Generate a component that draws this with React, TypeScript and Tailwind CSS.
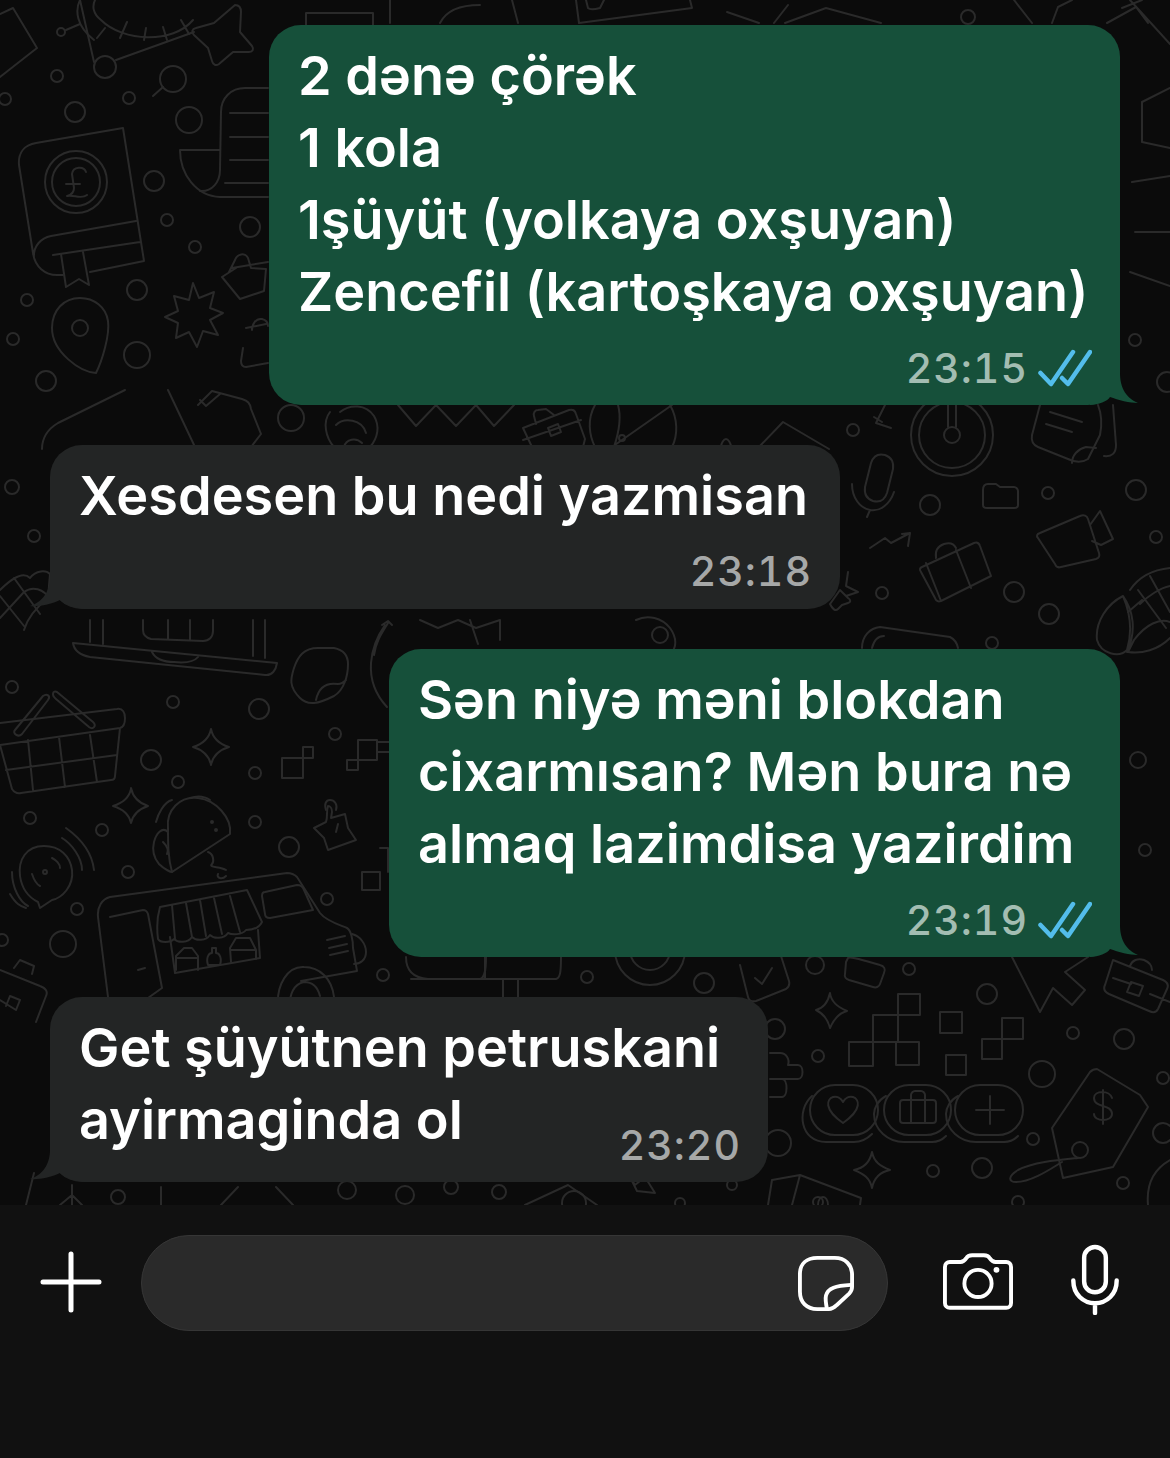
import React from 'react';

const font = "font-['Inter','Liberation_Sans',sans-serif]";

// wallpaper circles, page coordinates: cx, cy, r
const dots: [number, number, number][] = [
  [57, 76, 6], [75, 112, 10], [129, 98, 6], [5, 99, 6], [189, 120, 13], [154, 181, 10], [167, 220, 6], [195, 247, 6],
  [250, 227, 10], [27, 300, 6], [137, 290, 10], [13, 339, 6], [137, 355, 13], [46, 381, 10], [291, 418, 13],
  [12, 487, 7], [34, 536, 6], [853, 430, 6], [930, 505, 10], [1048, 493, 6], [1136, 490, 10], [1156, 537, 6],
  [882, 593, 6], [1014, 592, 10], [1049, 614, 10], [992, 643, 6], [1135, 340, 6], [1167, 382, 10],
  [12, 687, 6], [173, 702, 6], [259, 709, 10], [335, 734, 6], [151, 760, 10], [178, 782, 6], [255, 773, 6],
  [30, 818, 6], [102, 830, 6], [255, 822, 6], [289, 847, 10], [128, 872, 6], [77, 909, 6], [63, 944, 13],
  [2, 940, 6], [327, 899, 6], [383, 975, 6], [587, 977, 6], [704, 983, 10],
  [987, 994, 10], [909, 969, 6], [815, 965, 9], [1073, 1033, 6], [1124, 1039, 10], [1042, 1074, 13], [1163, 1078, 6],
  [1033, 1139, 6], [982, 1168, 10], [933, 1171, 6], [1123, 1183, 6], [1018, 1202, 6], [818, 1056, 6], [775, 1029, 10],
  [778, 1143, 13], [1163, 1133, 10], [347, 1190, 9], [118, 1197, 7], [405, 1195, 9], [451, 1187, 7], [499, 1192, 7],
  [732, 1185, 5], [680, 1203, 5], [818, 1202, 5], [968, 17, 7], [1145, 850, 6], [1138, 760, 8],
];

function Wallpaper() {
  return (
    <svg className="absolute inset-0" width="1170" height="1205" viewBox="0 0 1170 1205" fill="none" stroke="#2a2a2a" strokeWidth="2" strokeLinecap="round" strokeLinejoin="round">
      {dots.map(([cx, cy, r], i) => <circle key={i} cx={cx} cy={cy} r={r} />)}

      {/* top left: box, roulette wheel, magnifier, star */}
      <path d="M13 8l24 40L0 77M0 14l13-6" />
      <path d="M95 0c-3 6-2 14 6 20 22 22 72 24 92 0M80 0c-5 10-4 26 14 40M127 22l-7 16M146 28l-2 12M163 27l4 13M181 20l8 14M105 28l-8 10" />
      <circle cx="105" cy="67" r="11" /><path d="M116 60l78-28M94 62L80 0" />
      <circle cx="61" cy="32" r="4" /><path d="M66 30l14-6" />
      <path d="M235 5c5 0 6 3 6 7l-1 20 12 14c2 3 1 6-3 6h-16l-14 12c-3 2-6 1-7-3l-4-13-14-13c-3-3-2-6 2-7l18-5z" />
      <circle cx="173" cy="79" r="13" /><path d="M163 87l-10 9" />

      {/* book */}
      <path d="M123 128L36 143c-12 2-18 10-17 22l14 88c2 14 12 22 24 22h6M123 128l21 133-54 11M136 221l-85 15c-10 2-18 10-17 22M140 242l-87 13" />
      <path d="M61 254l5 33 13-8 10 6-6-33" />
      <circle cx="76" cy="182" r="31" /><circle cx="76" cy="182" r="24" />
      <path d="M86 172c-2-6-13-6-14 2l2 14c0 4-3 7-7 8 6-2 14 4 20-1M66 184h14" />

      {/* scroll */}
      <path d="M268 88h-23c-14 0-24 10-24 24l-1 58c0 12-8 22-20 21M180 150h40M180 150c0 24 16 46 40 47h48M230 113h38M230 137h38M230 160h38M225 183h43" />

      {/* pin, burst, bottle, lock */}
      <path d="M80 298c-16 0-28 12-28 30 0 24 28 44 44 45 6-12 14-38 12-52-2-14-14-23-28-23z" /><circle cx="80" cy="328" r="8" />
      <path d="M193 283l6 15 15-6-4 16 13 5-13 7 8 15-15-4-6 16-8-15-13 6 2-15-13-6 13-6-4-15 15 4z" />
      <path d="M232 268l36 -6M229 272l6 -12c2-6 10-8 13-2l3 10 15 1 -2 22-24 8-18-22 14-9" />
      <path d="M246 328l20-4M243 348l-2 13c0 4 2 6 5 6l22-4M252 330c0-6 4-12 10-11 4 1 6 4 6 7" />

      {/* below first bubble */}
      <path d="M125 390L58 423c-10 6-16 14-16 26" />
      <path d="M168 390l27 57M198 405l14-14 30 8c6 2 8 4 9 10l10 25-10 13M200 400l6 6 14-12" />
      <path d="M340 412c10-8 26-8 34 4 6 10 4 22-4 31M330 412c-8 10-4 26 4 35M336 425c8-8 26-6 30 8M344 447c2-8 12-10 18-4" />
      <path d="M398 405l18 21 20-21 20 21 20-21 18 21 20-21" />
      <path d="M523 428l46-18c4-1 6 0 7 4l9 25-2 8M532 447l-9-19M536 424l-2-8c-1-3 1-6 4-6l8-1 8 6M523 440l58-20M548 428l10-4 3 8-10 4z" />
      <path d="M595 405c-8 14-6 30 0 42M670 405c8 14 8 30 2 42M618 405c4 14 0 30-4 42M612 447l60-42" />
      <circle cx="622" cy="438" r="3" />
      <path d="M759 447l24-25 46 27M721 447c0-4 3-8 5-8s5 4 5 8" />

      {/* clock */}
      <circle cx="952" cy="435" r="41" /><circle cx="952" cy="435" r="33" /><circle cx="952" cy="435" r="8" /><path d="M948 405v22M956 405v22" />
      <path d="M885 405l-9 18 15 5M874 417l8 5" />

      {/* card stack top right */}
      <path d="M1040 405l-8 30c-1 6 1 10 6 12l30 12c8 4 14 4 20 0l12-24c2-10 2-20-2-30" />
      <path d="M1050 412l32 10M1046 424l26 8M1072 463c0-8 6-14 14-16l10 1M1113 405l3 40c0 8-4 12-12 11" />

      {/* mic, folder, camera, luggage, arrow */}
      <path d="M885 455c-8-2-12 2-14 8l-6 24c-1 8 2 12 8 14 8 2 12-2 14-8l6-24c1-8-2-12-8-14z" />
      <path d="M852 484c0 14 8 24 18 26s20-6 24-18M870 510l-3 7" />
      <path d="M983 490c0-4 2-6 5-6h8l4 3h14c2 0 4 2 4 4v14c0 2-2 3-4 3h-27c-2 0-4-1-4-3z" />
      <path d="M1040 533l40-17c4-2 7 0 8 3l11 34c1 3 0 5-3 6l-35 8c-3 1-5 0-6-3l-17-26c-2-2-1-4 2-5zM1090 525l10-14 13 28-12 6-9-4" />
      <path d="M870 548l15-10 6 5 19-10-8 1M910 533l-2 13" />
      <path d="M922 567l52-24c3-1 5 0 6 3l11 30-50 25c-3 1-5 0-6-3l-14-26c-2-3-1-4 1-5zM936 558c-1-7 2-12 8-14 6-2 10 0 12 4M941 601l-15-38M971 588l-15-38" />
      <path d="M830 604l10-14 8 8c3 2 3 4 0 5l-6 2-4 4c-3 3-6-1-8-5zM848 572l-2 14 12 6-12 4" />

      {/* corn */}
      <path d="M1097 640c-2-18 10-36 26-44 6 14 10 34 4 54-8 8-26 4-30-10zM1123 596c10 14 14 34 4 56M1170 622c-10-4-24 2-36 18l-6 12c14 2 30-2 42-14" />
      <path d="M1130 590c8-12 20-20 40-22M1140 604c8-8 20-16 30-18M1150 576l20 36M1138 590l28 38M1128 612l14-12" />

      {/* corn, left edge */}
      <path d="M0 590c14-14 24-18 30-12 6-8 16-8 20-4l-2 24c-10 8-20 18-24 32M0 618l24-26c8-6 20-4 26 8M14 578l26 36M0 596l24 30" />

      {/* laptop */}
      <path d="M73 643l204 20c-1 7-5 13-12 12L90 657c-10-2-16-7-17-14zM90 620v22M103 620v24M265 620v38M253 620v36M152 652c4 8 12 10 22 10 10 1 20 0 24-5" />
      <path d="M143 620v10c0 6 4 8 8 9l52 2c6 0 10-4 10-10v-11M168 620v19M190 620v20" />
      <path d="M420 620l18 8 20-8 18 8 24-8v20M470 620l8 24M636 620c12-6 26-2 34 8 10 14 4 26-4 28" />
      <circle cx="660" cy="635" r="8" />
      <path d="M862 648c0-12 8-20 18-21l70 10c4 2 7 6 8 11M872 648c2-8 6-12 12-12" />

      {/* sticker and banana */}
      <path d="M318 648c-14 0-20 8-24 20-3 10-6 18 6 30 8 8 18 6 34-2 10-6 14-20 14-32 0-8-4-14-14-16zM316 700c2-10 8-18 22-16 4 0 6-2 8-4" />
      <path d="M385 625c-14 20-24 54 2 82M374 655c2-14 8-22 14-32M382 625l6-4 4 4" />

      {/* basket */}
      <path d="M0 723l117-14c6-1 8 4 8 9s-1 9-5 10L0 745M120 728l-5 48c0 3-2 4-4 4l-90 13c-4 1-7-1-9-4L0 745M28 740l5 50M59 737l6 50M90 735l7 47M6 770l111-15" />
      <path d="M15 730l28-34c4-3 8 0 5 4l-26 34c-4 4-10-1-7-4zM57 692l36 30c4 4 0 8-4 5L56 699c-5-4-3-9 1-7z" />

      {/* sparkles and pixels */}
      <path d="M211 729c2 10 8 15 18 18-10 3-16 8-18 18-2-10-8-15-18-18 10-3 16-8 18-18z" />
      <path d="M131 788c2 10 8 15 17 18-9 3-15 8-17 17-2-9-8-14-18-17 10-3 16-8 18-17z" />
      <path d="M282 758h21v20h-21zM303 747h10v11h-10z" />
      <path d="M358 740h19v20h-19zM347 760h11v10h-11zM377 742h13M377 752h13" />
      <path d="M362 872h18v18h-18zM380 848h8v24" />
      <path d="M328 806c2 0 4 2 4 6l-1 6 14-4 3 14 8 12-28 10-4-12-10-10 12-6c2-6 0-10 2-16zM336 832l2-8" />
      <path d="M326 810c-2-6 0-10 4-10s8 4 6 10" />

      {/* taco */}
      <path d="M172 872l58-38c2-16-14-34-32-36-18-2-32 12-30 30 0 16 0 30 4 44z" />
      <path d="M168 832c-6-6-12 2-14 10-2 8 0 16 5 22 6 6 12 8 13 8M172 800c-8 2-14 14-16 22M210 800c-6-4-14-4-20-2M163 842c4 4 6 8 4 12M208 852c6 2 6 10 4 12-4 4 8 2 14 6M218 874c-2 4 4 6 8 2" />
      <circle cx="212" cy="822" r="1" /><circle cx="216" cy="830" r="1" />

      {/* signal bubble */}
      <path d="M44 846c-18 0-26 14-24 30 2 14 10 22 18 26l2 6 12-8c10-2 22-14 20-30-2-14-12-24-28-24z" />
      <path d="M66 828c14 10 26 24 28 42M62 838c10 6 20 20 20 32M12 872c0 16 8 30 16 34M26 908c-6-2-10-4-16-14" />
      <circle cx="45" cy="872" r="2" /><path d="M32 874c2 6 4 10 8 12M52 858c4 2 8 6 8 10" />

      {/* food truck */}
      <path d="M108 997L98 917c-1-10 4-18 12-20l177-24c4 0 8 2 10 4l23 36c6 8 20 12 27 15 4 2 6 12 6 20l4 23-56 10M122 1019l-14-22M278 1008c-2-24 10-42 26-41 16 0 28 12 30 30M290 1008c-1-14 4-24 14-26 10 0 14 6 16 14" />
      <path d="M110 917l33-7c3 0 4 1 5 4l14 74M145 968l-7 2M122 1019l34-8M162 988l-28 20" />
      <path d="M160 907c-3 10-3 24-2 32 2 4 12 4 16 0 4 4 14 4 18-2 4 4 14 4 18-2 4 4 14 4 18-2 4 2 14 2 18-3 4 0 12 0 16-8l-15-32zM172 905l3 34M186 903l6 34M200 900l6 36M214 898l8 36M230 896l10 36" />
      <path d="M170 937l5 36 85-15-2-28" />
      <path d="M176 970v-14l8-8h8l6 8v14M176 958h22M208 965c-2-6 0-12 4-12v-5h4v5c4 0 6 6 4 12zM231 962l-1-14 6-10h14l6 12v9M230 950h26" />
      <path d="M265 892l32-7c3 0 6 2 7 5l9 20-43 8c-3 0-5-1-5-4l-3-18c0-2 1-4 3-4z" />
      <path d="M327 940l18-4M329 948l18-4M330 955l18-4M352 934c8 2 14 10 14 18s-6 12-12 12" />

      {/* left edge, briefcase */}
      <path d="M0 970l40 16c6 2 8 6 6 10l-10 26M0 1000l16 10 4-10-10-4-4 10M14 968l6-8 14 6-2 8" />

      {/* below the third bubble */}
      <path d="M406 957c0 14 8 21 22 22h52c4-1 6-6 6-22M411 979h145c4-1 5-6 5-22M485 957v22M503 980v17M518 980v17" />
      <circle cx="650" cy="950" r="35" /><circle cx="650" cy="950" r="20" />
      <path d="M740 965l8 32c1 4 4 5 8 4l30-12c3-2 4-4 3-8l-8-25M755 978l7 6 10-16" />

      {/* pixels, pills, price tag */}
      <path d="M849 1042h24v24h-24zM873 1015h25v27h-25zM898 994h22v21h-22zM896 1042h23v23h-23zM940 1012h22v21h-22zM946 1055h20v20h-20zM982 1039h20v20h-20zM1002 1018h21v21h-21z" />
      <path d="M830 993c1 8 7 14 17 18-8 2-14 10-17 17-2-8-6-14-14-18 8-2 12-8 14-17zM872 1152c2 10 8 14 18 18-10 2-16 8-18 18-2-10-8-14-18-18 10-2 16-8 18-18z" />
      <path d="M848 958c2-2 14 2 18 3l14 4c4 1 6 4 4 8l-4 11c-1 3-4 4-7 3l-24-7c-3-1-5-3-4-6l1-12z" />
      <path d="M1012 957l28 55 13-24 19 17 13-15-20-18 23-15" />
      <path d="M770 1053h10c6 0 10 6 8 12h10c6 0 6 14 0 14H770M770 1079h12c6 0 6 18 0 18H770" />
      <rect x="810" y="1085" width="68" height="50" rx="25" /><rect x="884" y="1085" width="67" height="50" rx="25" /><rect x="955" y="1085" width="68" height="50" rx="25" />
      <path d="M812 1096c-16 14-12 46 14 46h28c8 0 14-4 18-8M886 1096c-8 4-12 12-12 18 0 16 14 28 30 28h28c6 0 10-2 14-6M958 1096c-8 4-12 12-12 18 0 16 14 28 30 28h28c6 0 10-2 14-6" />
      <path d="M843 1123c-20-14-16-24-10-26 4-1 8 1 10 5 2-4 6-6 10-5 6 2 10 12-10 26zM900 1103c0-2 1-3 3-3h30c2 0 3 1 3 3v17c0 2-1 3-3 3h-30c-2 0-3-1-3-3zM911 1100v-5c0-2 2-4 4-4h6c2 0 4 2 4 4v5M911 1100v23M925 1100v23M990 1096v28M976 1110h28" />
      <path d="M1097 1069c-3 0-5 1-7 3l-38 56 11 50 50-11 35-60-8-12z" />
      <path d="M1103 1090v34M1112 1098c-2-8-18-8-18 0 0 10 18 6 18 16 0 8-18 8-18 0" />
      <circle cx="1080" cy="1150" r="8" />
      <path d="M1078 1158c-20 2-44 4-60 12-10 6-10 12-2 12 16 0 36-14 46-20" />
      <path d="M1113 960l50 20c4 2 6 5 4 9l-9 20c-2 4-5 4-9 2l-40-17c-4-2-6-5-4-9l8-25zM1130 966c2-6 8-8 14-6 5 2 8 6 8 10M1113 978l18 6M1150 994l20 8M1131 982l12 4-4 10-12-4z" />
      <path d="M1148 1205c-2-22 6-36 22-45" />

      {/* under the last bubble */}
      <path d="M26 1205l8-32M72 1205v-20M72 1195l-12 10M72 1195l10 10M161 1205v-18M221 1205l17-18M276 1187l17 18M525 1205l43-20 29 20" />
      <circle cx="574" cy="1203" r="12" />
      <path d="M630 1177l5 8 10-8 10 16-18-2z" />
      <path d="M772 1180l28-5 61 23-1 7M800 1175l-8 30M772 1180l-4 25" />
      <path d="M818 1205c0-6 3-8 5-8s5 2 5 8" />

      {/* strip along the very top */}
      <path d="M306 25V13h67v12M390 0v23M440 23c6-12 20-18 40-18M512 0l6 23M576 0l3 23 113-15-2-8M586 0l2 8c2 2 8 1 12 0l4-8M727 12l32 11M788 5l-14 18M785 23l41-15 55 15" />
      <path d="M1014 0l18 23M1052 23l6-16 14-7M1107 23l29-16 12 16M1122 8l20-8M1130 0l40 44" />
      <path d="M1170 88l-28 14v40l28 6M1132 182l38-6M1135 232h35M1130 272l40 14" />
    </svg>
  );
}

function DoubleCheck() {
  return (
    <svg className="ml-[10px]" width="54" height="38" viewBox="0 0 54 38" fill="none" stroke="#53bdeb" strokeWidth="4.5" strokeLinecap="round" strokeLinejoin="round">
      <path d="M2.5 24L13 35 35 3" />
      <path d="M24 29l6 6 22-32" />
    </svg>
  );
}

function OutTail() {
  return (
    <svg className="absolute bottom-0 right-[-20px]" width="50" height="32" viewBox="0 0 50 32">
      <path d="M0 32V0h30c0 12 4 24 18 30-8 0-20-3-28-6-2 4-12 8-20 8z" fill="#16503a" />
    </svg>
  );
}

function InTail() {
  return (
    <svg className="absolute bottom-0 left-[-22px]" width="60" height="32" viewBox="0 0 60 32">
      <path d="M60 32V0H22c0 10-4 24-20 29 8 1 22-2 30-6 4 5 16 9 28 9z" fill="#232525" />
    </svg>
  );
}

const msgText = 'text-[54px] leading-[72px] font-semibold text-white whitespace-nowrap';
const timeText = 'text-[41px] leading-[38px] font-medium tabular-nums tracking-[1px]';

function Sent({ lines, time, width }: { lines: string[]; time: string; width: string }) {
  return (
    <div className={`relative self-end ${width} rounded-[32px] bg-[#16503a] pl-[29px] pr-[28px] pt-[15px] pb-[18px]`}>
      <div className={msgText}>
        {lines.map(l => <div key={l}>{l}</div>)}
      </div>
      <div className="flex items-center justify-end mt-[21px] h-[38px]">
        <span className={`${timeText} text-[#a3bdb2]`}>{time}</span>
        <DoubleCheck />
      </div>
      <OutTail />
    </div>
  );
}

function Received({ lines, time, width, inline }: { lines: string[]; time: string; width: string; inline?: boolean }) {
  return (
    <div className={`relative self-start ${width} rounded-[32px] bg-[#232525] pl-[29px] pr-[28px] pt-[15px] ${inline ? 'pb-[26px]' : 'pb-[19px]'}`}>
      <div className={msgText}>
        {lines.map(l => <div key={l}>{l}</div>)}
      </div>
      {inline ? (
        <span className={`${timeText} absolute right-[27px] bottom-[18px] text-[#a6a8a8]`}>{time}</span>
      ) : (
        <div className={`${timeText} text-right text-[#a6a8a8] mt-[20px]`}>{time}</div>
      )}
      <InTail />
    </div>
  );
}

export default function App() {
  return (
    <div className={`${font} w-[1170px] h-[1458px] bg-[#0b0b0b] flex flex-col overflow-hidden`}>
      <div className="relative h-[1205px] shrink-0">
        <Wallpaper />
        <div className="relative flex flex-col gap-[40px] pt-[25px] pl-[50px] pr-[50px]">
          <Sent width="w-[851px]" time="23:15" lines={['2 dənə çörək', '1 kola', '1şüyüt (yolkaya oxşuyan)', 'Zencefil (kartoşkaya oxşuyan)']} />
          <Received width="w-[790px]" time="23:18" lines={['Xesdesen bu nedi yazmisan']} />
          <Sent width="w-[731px]" time="23:19" lines={['Sən niyə məni blokdan', 'cixarmısan? Mən bura nə', 'almaq lazimdisa yazirdim']} />
          <Received width="w-[718px]" inline time="23:20" lines={['Get şüyütnen petruskani', 'ayirmaginda ol']} />
        </div>
      </div>

      <div className="flex-1 bg-[#111111] flex items-start pt-[30px] pl-[40px]">
        <svg className="mt-[16px]" width="62" height="62" viewBox="0 0 62 62" fill="none" stroke="white" strokeWidth="5" strokeLinecap="round">
          <path d="M31 3v56M3 31h56" />
        </svg>
        <div className="ml-[39px] w-[747px] h-[96px] rounded-[48px] bg-[#2a2a2a] border border-[#363636] flex items-center justify-end pr-[33px]">
          <svg width="56" height="56" viewBox="0 0 58 58" fill="none" stroke="white" strokeWidth="4" strokeLinejoin="round">
            <path d="M20 3h18c11 0 18 7 18 18v12c0 3-1 5-3 7L40 52c-2 2-5 4-8 4H20C9 56 2 49 2 38V20C2 9 9 3 20 3z" />
            <path d="M30 56c-1-5-2-10-1-14 2-8 10-10 26-11" />
          </svg>
        </div>
        <svg className="ml-[55px] mt-[18px]" width="70" height="57" viewBox="0 0 72 58" fill="none" stroke="white" strokeWidth="4" strokeLinejoin="round">
          <path d="M7 9h11c3 0 4-1 6-4 1-2 3-3 6-3h12c3 0 5 1 6 3 2 3 3 4 6 4h11c3 0 5 2 5 5v37c0 3-2 5-5 5H7c-3 0-5-2-5-5V14c0-3 2-5 5-5z" />
          <circle cx="36" cy="31" r="14" />
          <circle cx="55" cy="17" r="3" fill="white" stroke="none" />
        </svg>
        <svg className="ml-[57px] mt-[9px]" width="50" height="71" viewBox="0 0 50 72" fill="none" stroke="white" strokeWidth="4.5" strokeLinecap="round">
          <rect x="14" y="3" width="22" height="46" rx="11" />
          <path d="M3 37c0 14 10 23 22 23s22-9 22-23M25 60v10" />
        </svg>
      </div>
    </div>
  );
}
